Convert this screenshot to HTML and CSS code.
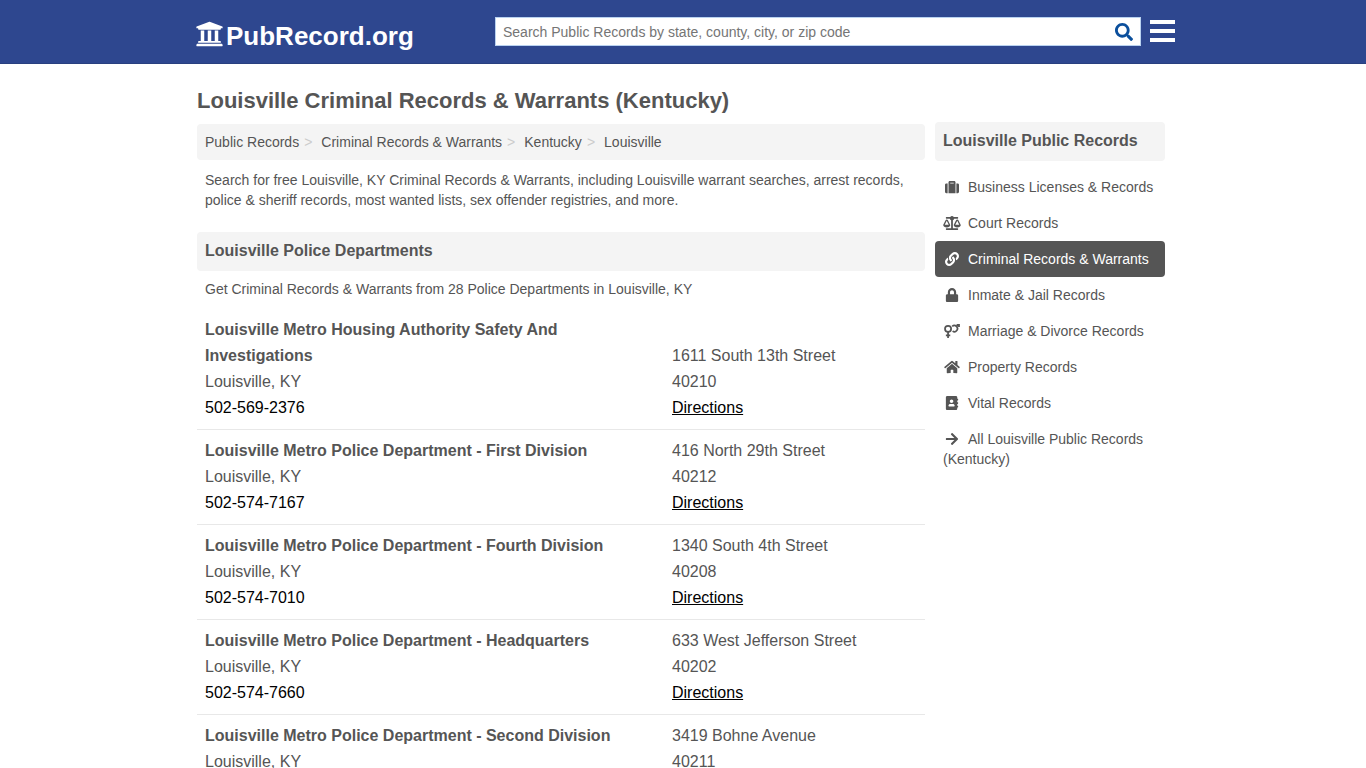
FILE: index.html
```html
<!DOCTYPE html>
<html lang="en">
<head>
<meta charset="utf-8">
<meta name="viewport" content="width=device-width, initial-scale=1">
<title>Louisville Criminal Records &amp; Warrants (Kentucky)</title>
<link rel="stylesheet" href="styles.css">
</head>
<body>
<header class="site-header">
  <div class="header-inner">
    <a class="logo" href="#">
      <svg class="logo-icon" viewBox="0 0 512 512" aria-hidden="true"><path d="M496 128v16a8 8 0 0 1-8 8h-24v12c0 6.627-5.373 12-12 12H60c-6.627 0-12-5.373-12-12v-12H24a8 8 0 0 1-8-8v-16a8 8 0 0 1 4.941-7.392l232-88a7.996 7.996 0 0 1 6.118 0l232 88A8 8 0 0 1 496 128zm-24 304H40c-13.255 0-24 10.745-24 24v16a8 8 0 0 0 8 8h464a8 8 0 0 0 8-8v-16c0-13.255-10.745-24-24-24zM96 192v192H60c-6.627 0-12 5.373-12 12v20h416v-20c0-6.627-5.373-12-12-12h-36V192h-64v192h-64V192h-64v192h-64V192H96z"/></svg>
      <span>PubRecord.org</span>
    </a>
    <form class="search" role="search">
      <input class="search-input" type="text" aria-label="Search Public Records" placeholder="Search Public Records by state, county, city, or zip code">
      <button class="search-button" type="submit" aria-label="Search">
        <svg viewBox="0 0 512 512" aria-hidden="true"><path d="M505 442.7L405.3 343c-4.5-4.5-10.6-7-17-7H372c27.6-35.3 44-79.7 44-128C416 93.1 322.9 0 208 0S0 93.1 0 208s93.1 208 208 208c48.3 0 92.7-16.4 128-44v16.3c0 6.4 2.5 12.5 7 17l99.7 99.7c9.4 9.4 24.6 9.4 33.9 0l28.3-28.3c9.4-9.4 9.4-24.6.1-34zM208 336c-70.7 0-128-57.2-128-128 0-70.7 57.2-128 128-128 70.7 0 128 57.2 128 128 0 70.7-57.2 128-128 128z"/></svg>
      </button>
    </form>
    <button class="menu-button" type="button" aria-label="Menu">
      <svg viewBox="0 0 25 22" aria-hidden="true"><path d="M0 0h25v4H0zM0 9h25v4H0zM0 18h25v4H0z"/></svg>
    </button>
  </div>
</header>

<div class="page">
  <main class="content">
    <h1 class="page-title">Louisville Criminal Records &amp; Warrants (Kentucky)</h1>
    <nav aria-label="Breadcrumb">
      <ol class="breadcrumb">
        <li><a href="#">Public Records</a></li>
        <li><a href="#">Criminal Records &amp; Warrants</a></li>
        <li><a href="#">Kentucky</a></li>
        <li><a href="#">Louisville</a></li>
      </ol>
    </nav>
    <p class="intro">Search for free Louisville, KY Criminal Records &amp; Warrants, including Louisville warrant searches, arrest records, police &amp; sheriff records, most wanted lists, sex offender registries, and more.</p>

    <h2 class="section-title">Louisville Police Departments</h2>
    <p class="section-note">Get Criminal Records &amp; Warrants from 28 Police Departments in Louisville, KY</p>

    <ul class="listing">
      <li class="entry">
        <div class="entry-main"><strong>Louisville Metro Housing Authority Safety And Investigations</strong><span>Louisville, KY</span><a class="phone" href="tel:5025692376">502-569-2376</a></div>
        <div class="entry-side"><span>1611 South 13th Street</span><span>40210</span><a class="directions" href="#">Directions</a></div>
      </li>
      <li class="entry">
        <div class="entry-main"><strong>Louisville Metro Police Department - First Division</strong><span>Louisville, KY</span><a class="phone" href="tel:5025747167">502-574-7167</a></div>
        <div class="entry-side"><span>416 North 29th Street</span><span>40212</span><a class="directions" href="#">Directions</a></div>
      </li>
      <li class="entry">
        <div class="entry-main"><strong>Louisville Metro Police Department - Fourth Division</strong><span>Louisville, KY</span><a class="phone" href="tel:5025747010">502-574-7010</a></div>
        <div class="entry-side"><span>1340 South 4th Street</span><span>40208</span><a class="directions" href="#">Directions</a></div>
      </li>
      <li class="entry">
        <div class="entry-main"><strong>Louisville Metro Police Department - Headquarters</strong><span>Louisville, KY</span><a class="phone" href="tel:5025747660">502-574-7660</a></div>
        <div class="entry-side"><span>633 West Jefferson Street</span><span>40202</span><a class="directions" href="#">Directions</a></div>
      </li>
      <li class="entry">
        <div class="entry-main"><strong>Louisville Metro Police Department - Second Division</strong><span>Louisville, KY</span></div>
        <div class="entry-side"><span>3419 Bohne Avenue</span><span>40211</span></div>
      </li>
    </ul>
  </main>

  <aside class="sidebar">
    <h2 class="section-title">Louisville Public Records</h2>
    <nav class="side-nav" aria-label="Louisville Public Records">
      <a href="#"><svg class="icon" viewBox="0 0 512 512" aria-hidden="true"><path d="M128 480h256V80c0-26.5-21.5-48-48-48H176c-26.5 0-48 21.5-48 48v400zm64-384h128v32H192V96zm320 80v256c0 26.5-21.5 48-48 48h-48V128h48c26.5 0 48 21.5 48 48zM96 480H48c-26.5 0-48-21.5-48-48V176c0-26.5 21.5-48 48-48h48v352z"/></svg>Business Licenses &amp; Records</a>
      <a href="#"><svg class="icon" viewBox="0 0 640 512" aria-hidden="true"><path d="M256 336h-.02c0-16.18 1.34-8.73-85.05-181.51-17.65-35.29-68.19-35.36-85.87 0C-2.06 328.75.02 320.33.02 336H0c0 44.18 57.31 80 128 80s128-35.82 128-80zM128 176l72 144H56l72-144zm511.98 160c0-16.18 1.34-8.73-85.05-181.51-17.65-35.29-68.19-35.36-85.87 0-87.12 174.26-85.04 165.84-85.04 181.51H384c0 44.18 57.31 80 128 80s128-35.82 128-80h-.02zM440 320l72-144 72 144H440zm88 128H352V153.25c23.51-10.29 41.16-31.48 46.39-57.25H528c8.84 0 16-7.16 16-16V48c0-8.84-7.16-16-16-16H383.64C369.04 12.68 346.09 0 320 0s-49.04 12.68-63.64 32H112c-8.84 0-16 7.16-16 16v32c0 8.84 7.16 16 16 16h129.61c5.23 25.76 22.87 46.96 46.39 57.25V448H112c-8.84 0-16 7.16-16 16v32c0 8.84 7.16 16 16 16h416c8.84 0 16-7.16 16-16v-32c0-8.84-7.16-16-16-16z"/></svg>Court Records</a>
      <a class="active" href="#" aria-current="page"><svg class="icon" viewBox="0 0 512 512" aria-hidden="true"><path d="M326.612 185.391c59.747 59.809 58.927 155.698.36 214.59-.11.12-.24.25-.36.37l-67.2 67.2c-59.27 59.27-155.699 59.262-214.96 0-59.27-59.26-59.27-155.7 0-214.96l37.106-37.106c9.84-9.84 26.786-3.3 27.294 10.606.648 17.722 3.826 35.527 9.69 52.721 1.986 5.822.567 12.262-3.783 16.612l-13.087 13.087c-28.026 28.026-28.905 73.66-1.155 101.96 28.024 28.579 74.086 28.749 102.325.51l67.2-67.19c28.191-28.191 28.073-73.757 0-101.83-3.701-3.694-7.429-6.564-10.341-8.569a16.037 16.037 0 0 1-6.947-12.606c-.396-10.567 3.348-21.456 11.698-29.806l21.054-21.055c5.521-5.521 14.182-6.199 20.584-1.731a152.482 152.482 0 0 1 20.522 17.197zM467.547 44.449c-59.261-59.262-155.69-59.27-214.96 0l-67.2 67.2c-.12.12-.25.25-.36.37-58.566 58.892-59.387 154.781.36 214.59a152.454 152.454 0 0 0 20.521 17.196c6.402 4.468 15.064 3.789 20.584-1.731l21.054-21.055c8.35-8.35 12.094-19.239 11.698-29.806a16.037 16.037 0 0 0-6.947-12.606c-2.912-2.005-6.64-4.875-10.341-8.569-28.073-28.073-28.191-73.639 0-101.83l67.2-67.19c28.239-28.239 74.3-28.069 102.325.51 27.75 28.3 26.872 73.934-1.155 101.96l-13.087 13.087c-4.35 4.35-5.769 10.79-3.783 16.612 5.864 17.194 9.042 34.999 9.69 52.721.509 13.906 17.454 20.446 27.294 10.606l37.106-37.106c59.271-59.259 59.271-155.699.001-214.959z"/></svg>Criminal Records &amp; Warrants</a>
      <a href="#"><svg class="icon" viewBox="0 0 448 512" aria-hidden="true"><path d="M400 224h-24v-72C376 68.2 307.8 0 224 0S72 68.2 72 152v72H48c-26.5 0-48 21.5-48 48v192c0 26.5 21.5 48 48 48h352c26.5 0 48-21.5 48-48V272c0-26.5-21.5-48-48-48zm-104 0H152v-72c0-39.7 32.3-72 72-72s72 32.3 72 72v72z"/></svg>Inmate &amp; Jail Records</a>
      <a href="#"><svg class="icon icon-line" viewBox="0 0 576 512" aria-hidden="true"><circle cx="144" cy="176" r="112"/><path d="M144 288v224M64 416h160M296 88a112 112 0 1 1 14 172M442 108L546 14M456 30h88v84"/></svg>Marriage &amp; Divorce Records</a>
      <a href="#"><svg class="icon" viewBox="0 0 576 512" aria-hidden="true"><path d="M280.37 148.26L96 300.11V464a16 16 0 0 0 16 16l112.06-.29a16 16 0 0 0 15.92-16V368a16 16 0 0 1 16-16h64a16 16 0 0 1 16 16v95.64a16 16 0 0 0 16 16.05L464 480a16 16 0 0 0 16-16V300L295.67 148.26a12.19 12.19 0 0 0-15.3 0zM571.6 251.47L488 182.56V44.05a12 12 0 0 0-12-12h-56a12 12 0 0 0-12 12v72.61L318.47 43a48 48 0 0 0-61 0L4.34 251.47a12 12 0 0 0-1.6 16.9l25.5 31A12 12 0 0 0 45.15 301l235.22-193.74a12.19 12.19 0 0 1 15.3 0L530.9 301a12 12 0 0 0 16.9-1.6l25.5-31a12 12 0 0 0-1.7-16.93z"/></svg>Property Records</a>
      <a href="#"><svg class="icon" viewBox="0 0 448 512" aria-hidden="true"><path d="M436 160c6.6 0 12-5.4 12-12v-40c0-6.6-5.4-12-12-12h-20V48c0-26.5-21.5-48-48-48H48C21.5 0 0 21.5 0 48v416c0 26.5 21.5 48 48 48h320c26.5 0 48-21.5 48-48v-48h20c6.6 0 12-5.4 12-12v-40c0-6.6-5.4-12-12-12h-20v-64h20c6.6 0 12-5.4 12-12v-40c0-6.6-5.4-12-12-12h-20v-64h20zm-228-32c35.3 0 64 28.7 64 64s-28.7 64-64 64-64-28.7-64-64 28.7-64 64-64zm112 236.8c0 10.6-10 19.2-22.4 19.2H118.4C106 384 96 375.4 96 364.8v-19.2c0-31.8 30.1-57.6 67.2-57.6h5c12.3 5.1 25.7 8 39.8 8s27.6-2.9 39.8-8h5c37.1 0 67.2 25.8 67.2 57.6v19.2z"/></svg>Vital Records</a>
      <a href="#"><svg class="icon" viewBox="0 0 448 512" aria-hidden="true"><path d="M190.5 66.9l22.2-22.2c9.4-9.4 24.6-9.4 33.9 0L441 239c9.4 9.4 9.4 24.6 0 33.9L246.6 467.3c-9.4 9.4-24.6 9.4-33.9 0l-22.2-22.2c-9.5-9.5-9.3-25 .4-34.3L311.4 296H24c-13.3 0-24-10.7-24-24v-32c0-13.3 10.7-24 24-24h287.4L190.9 101.2c-9.8-9.3-10-24.8-.4-34.3z"/></svg>All Louisville Public Records (Kentucky)</a>
    </nav>
  </aside>
</div>
</body>
</html>
```
FILE: styles.css
```css
* { box-sizing: border-box; }

body {
  margin: 0;
  background: #fff;
  color: #555;
  font-family: "Liberation Sans", Arial, sans-serif;
  font-size: 14px;
  line-height: 20px;
}

h1, h2, p, ul, ol { margin: 0; padding: 0; }
ul, ol { list-style: none; }
a { color: inherit; text-decoration: none; }
button { padding: 0; border: 0; background: none; cursor: pointer; }
svg { fill: currentColor; }

/* Header */
.site-header {
  background: #2e478f;
  border-bottom: 1px solid #29407f;
  color: #fff;
}
.header-inner {
  display: flex;
  align-items: flex-start;
  max-width: 984px;
  min-height: 63px;
  margin: 0 auto;
}
.logo {
  display: flex;
  align-items: center;
  gap: 2px;
  flex: 0 0 304px;
  padding: 20px 0 0 4px;
  font-size: 26px;
  font-weight: bold;
  line-height: 30px;
}
.logo-icon { width: 29px; height: 28px; margin-bottom: 3px; }
.search {
  display: flex;
  flex: 1;
  height: 29px;
  margin-top: 17px;
  background: #fff;
  border: 1px solid #b9d2f0;
}
.search-input {
  flex: 1;
  min-width: 0;
  padding: 0 7px;
  border: 0;
  background: none;
  outline: none;
  color: #555;
  font: inherit;
}
.search-input::placeholder { color: #757575; opacity: 1; }
.search-button {
  display: flex;
  align-items: center;
  justify-content: center;
  width: 32px;
  color: #0b4f9c;
}
.search-button svg { width: 18px; height: 18px; }
.menu-button {
  width: 25px;
  height: 22px;
  margin: 20px 0 0 9px;
  color: #fff;
}
.menu-button svg { display: block; width: 100%; height: 100%; }

/* Page columns */
.page {
  display: flex;
  gap: 10px;
  max-width: 980px;
  margin: 0 auto;
  padding: 22px 8px 0 4px;
}
.content { flex: 1; min-width: 0; }
.sidebar { flex: 0 0 230px; padding-top: 36px; }

.page-title {
  margin-bottom: 8px;
  font-size: 22px;
  line-height: 30px;
}
.breadcrumb {
  display: flex;
  flex-wrap: wrap;
  padding: 8px;
  background: #f4f4f4;
  border-radius: 4px;
}
.breadcrumb li + li::before {
  content: ">";
  margin: 0 9px 0 5px;
  color: #ccc;
}
.intro { padding: 10px 8px 22px; }
.section-title {
  padding: 9px 8px 10px;
  background: #f4f4f4;
  border-radius: 4px;
  font-size: 16px;
  line-height: 20px;
}
.section-note { padding: 8px 8px 10px; }

/* Listing */
.entry {
  display: grid;
  grid-template-columns: 1fr 245px;
  align-items: end;
  padding: 8px;
  border-bottom: 1px solid #e8e8e8;
  font-size: 16px;
  line-height: 26px;
}
.entry-main, .entry-side {
  display: flex;
  flex-direction: column;
  align-items: flex-start;
}
.entry-main { padding-right: 8px; }
.phone, .directions { color: #000; }
.directions { text-decoration: underline; }

/* Sidebar */
.side-nav { padding-top: 8px; }
.side-nav a {
  display: block;
  padding: 8px;
  border-radius: 4px;
}
.side-nav .active { background: #555; color: #fff; }
.icon {
  width: 18px;
  height: 14px;
  margin-right: 7px;
  vertical-align: -2px;
}
.icon-line { fill: none; stroke: currentColor; stroke-width: 64; }
```
